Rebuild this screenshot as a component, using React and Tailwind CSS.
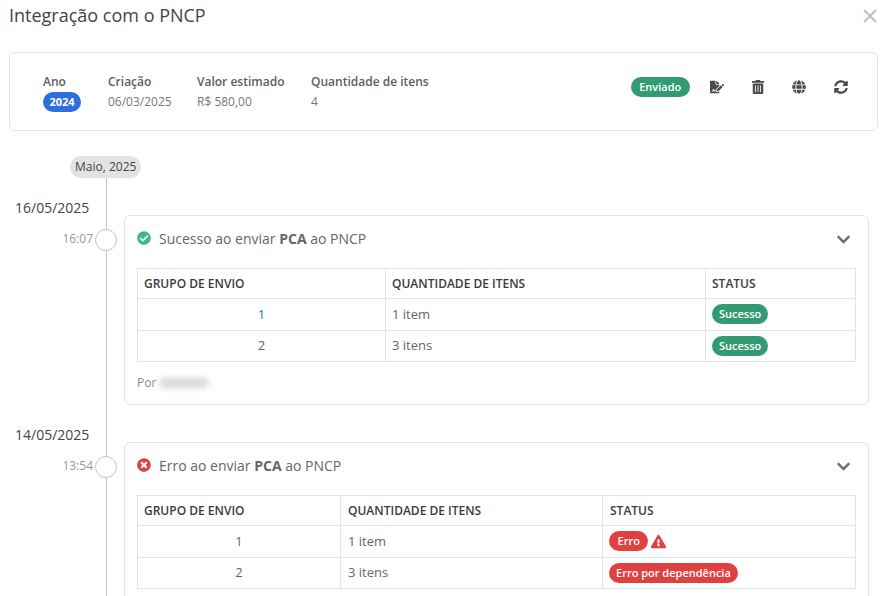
import { FaFileSignature, FaTrashAlt, FaGlobe, FaSyncAlt, FaCheckCircle, FaTimesCircle, FaExclamationTriangle, FaChevronDown } from 'react-icons/fa';

const badgeColors = {
  green: 'bg-[#339b73]',
  red: 'bg-[#e04040]',
};

function Badge({ color, className = 'px-[7px]', children }) {
  return (
    <span className={`inline-block h-5 rounded-full text-white text-[11px] font-semibold leading-5 ${className} ${badgeColors[color]}`}>
      {children}
    </span>
  );
}

function Info({ label, className, children }) {
  return (
    <div className={className}>
      <div className="text-[12px] font-semibold leading-[20px] text-[#5d5d5d]">{label}</div>
      <div className="text-[12px] leading-[20px] text-[#777777]">{children}</div>
    </div>
  );
}

function StatusTable({ widths, rows, pad = 'px-[6px]' }) {
  const border = 'border border-[#e3e3e3]';
  return (
    <table className="w-[718px] table-fixed border-collapse text-[13px]">
      <colgroup>
        {widths.map((w) => (
          <col key={w} className={w} />
        ))}
      </colgroup>
      <thead>
        <tr className="h-[30px] text-[12px] text-[#3b3b3b] text-left">
          <th className={`${border} px-[6px] font-semibold`}>GRUPO DE ENVIO</th>
          <th className={`${border} ${pad} font-semibold`}>QUANTIDADE DE ITENS</th>
          <th className={`${border} ${pad} font-semibold`}>STATUS</th>
        </tr>
      </thead>
      <tbody>
        {rows.map((row) => (
          <tr key={row.group} className="h-[31.5px] text-[#666666]">
            <td className={`${border} text-center ${row.link ? 'text-[#2a6fc4]' : ''}`}>{row.group}</td>
            <td className={`${border} ${pad}`}>{row.qty}</td>
            <td className={`${border} px-[6px]`}>{row.status}</td>
          </tr>
        ))}
      </tbody>
    </table>
  );
}

function Event({ time, icon, title, children }) {
  return (
    <div className="flex">
      <div className="w-[115px] shrink-0 flex justify-end items-start pt-[14px] pr-[7px]">
        <span className="text-[12px] leading-[20px] text-[#999999] mr-[2px]">{time}</span>
        <span className="w-[22px] h-[22px] rounded-full border border-[#c4c4c4] bg-white" />
      </div>
      <div className="w-[745px] border border-[#e3e3e3] rounded-md bg-white px-[12px] pt-[12px]">
        <div className="flex items-center h-[20px] text-[14px] text-[#666666]">
          {icon}
          <span className="ml-[8px]">{title}</span>
          <FaChevronDown className="ml-auto mr-[5px] mt-[3px] text-[#6e6e6e] text-[15px]" />
        </div>
        <div className="mt-[20px]">{children}</div>
      </div>
    </div>
  );
}

export default function App() {
  return (
    <div className="relative h-[596px] overflow-hidden bg-white pl-[9px] pr-[7px] font-['Open_Sans',sans-serif]">
      <div className="flex items-center justify-between h-[30px]">
        <h1 className="text-[18px] text-[#444444]">Integração com o PNCP</h1>
        <button className="text-[#c0c0c0] mr-px mt-[2px]">
          <svg width="14" height="14" viewBox="0 0 14 14" fill="none" stroke="currentColor" strokeWidth="2">
            <path d="M1 1l12 12M13 1L1 13" />
          </svg>
        </button>
      </div>

      <div className="mt-[22px] h-[79px] border border-[#e3e3e3] rounded-md flex items-center pl-[33px] pr-[29px]">
        <Info label="Ano" className="w-[65px]">
          <span className="inline-block w-[38px] h-5 rounded-full bg-[#2f6fdb] text-white text-center text-[11px] font-bold leading-5">2024</span>
        </Info>
        <Info label="Criação" className="w-[89px]">06/03/2025</Info>
        <Info label="Valor estimado" className="w-[114px]">R$ 580,00</Info>
        <Info label="Quantidade de itens">4</Info>
        <div className="ml-auto mb-[9px] flex items-center text-[#4a4a4a] text-[14px]">
          <Badge color="green" className="px-[8.5px]">Enviado</Badge>
          <FaFileSignature className="ml-[20px]" />
          <FaTrashAlt className="ml-[27.25px]" />
          <FaGlobe className="ml-[27px]" />
          <FaSyncAlt className="ml-[28px]" />
        </div>
      </div>

      <div className="relative mt-[25px]">
        <div className="absolute left-[97px] top-[10px] w-px h-[500px] bg-[#c4c4c4]" />
        <div className="relative ml-[61px] w-fit h-[22px] px-[5px] rounded-full bg-[#e3e3e3] text-[12px] leading-[22px] text-[#444444]">
          Maio, 2025
        </div>

        <div className="relative mt-[21px] ml-[6px] text-[14px] leading-[18px] text-[#444444]">16/05/2025</div>
        <div className="relative mt-[-2px]">
          <Event
            time="16:07"
            icon={<FaCheckCircle className="text-[#3bb78f] text-[14px]" />}
            title={<>Sucesso ao enviar <b className="font-bold">PCA</b> ao PNCP</>}
          >
            <StatusTable
              widths={['w-[248px]', 'w-[320px]', 'w-[150px]']}
              rows={[
                { group: '1', qty: '1 item', link: true, status: <Badge color="green">Sucesso</Badge> },
                { group: '2', qty: '3 itens', status: <Badge color="green">Sucesso</Badge> },
              ]}
            />
            <div className="flex items-center h-[42px] text-[12px] text-[#888888]">
              Por <span className="ml-[3px] w-[50px] h-[10px] rounded-full bg-[#d8d8d8] blur-[3px]" />
            </div>
          </Event>
        </div>

        <div className="relative mt-[21px] ml-[6px] text-[14px] leading-[18px] text-[#444444]">14/05/2025</div>
        <div className="relative mt-[-2px]">
          <Event
            time="13:54"
            icon={<FaTimesCircle className="text-[#e04040] text-[14px]" />}
            title={<>Erro ao enviar <b className="font-bold">PCA</b> ao PNCP</>}
          >
            <StatusTable
              widths={['w-[203px]', 'w-[262px]', 'w-[253px]']}
              pad="px-[7px]"
              rows={[
                {
                  group: '1',
                  qty: '1 item',
                  status: (
                    <span className="flex items-center gap-[3px]">
                      <Badge color="red" className="px-[8.5px]">Erro</Badge>
                      <FaExclamationTriangle className="text-[#e04040] text-[15px]" />
                    </span>
                  ),
                },
                { group: '2', qty: '3 itens', status: <Badge color="red">Erro por dependência</Badge> },
              ]}
            />
            <div className="h-[42px]" />
          </Event>
        </div>
      </div>
    </div>
  );
}
